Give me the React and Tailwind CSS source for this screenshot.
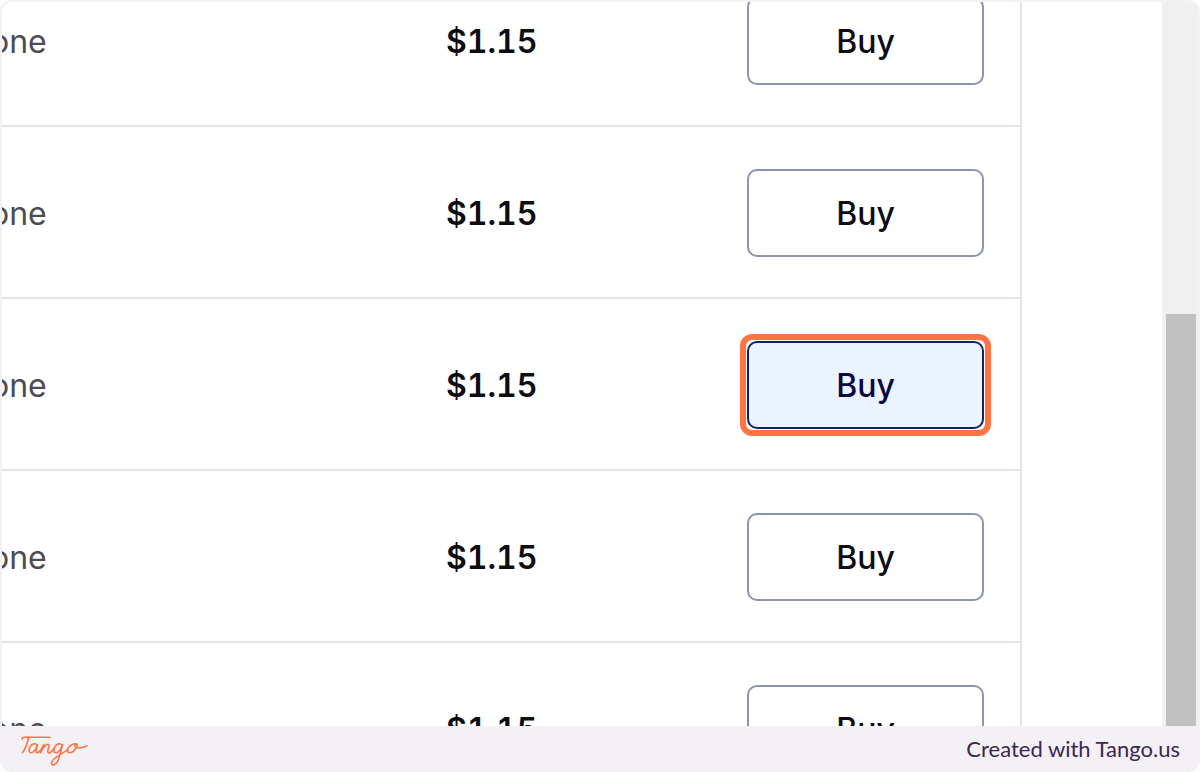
import React from 'react';

const rows = [
  { id: 1, type: 'one', price: '$1.15' },
  { id: 2, type: 'one', price: '$1.15' },
  { id: 3, type: 'one', price: '$1.15', active: true },
  { id: 4, type: 'one', price: '$1.15' },
  { id: 5, type: 'one', price: '$1.15' },
];

const BuyButton = ({ active }) => (
  <div className="relative">
    <button
      type="button"
      className={`block w-full h-22 pt-0.5 rounded-[10px] border-2 text-[32px] leading-10 font-medium ${
        active
          ? 'bg-[#eaf3ff] border-[#1c1c60] text-[#0b0840]'
          : 'bg-white border-[#8c94b0] text-[#0c0c12]'
      }`}
    >
      Buy
    </button>
    {/* Highlight frame */}
    {active && (
      <span className="absolute -inset-[7px] rounded-xl border-6 border-[#ff7442] pointer-events-none" />
    )}
  </div>
);

const TangoLogo = () => (
  <svg
    viewBox="0 0 70 36"
    className="w-[70px] h-9"
    fill="none"
    stroke="#ff7442"
    strokeWidth="1.6"
    strokeLinecap="round"
    strokeLinejoin="round"
    role="img"
    aria-label="Tango"
  >
    <path d="M2 8C2.200 6.800 3 6.300 4.500 6.300H30" />
    <path d="M8.500 6.500C7.500 12 5.500 17.500 2.500 21.700" />
    <path d="M17 14C15.500 12 12 12.500 10.300 15.500C8.500 18.800 8.800 21.800 11 21.800C13.500 21.800 16 18 17.500 13.500C16.500 17 15.300 20.500 16.500 21.500C18.500 22.500 21.500 18.500 23.800 13.500L20.500 21.800C22.500 17.500 26 13 28.300 13.200C30.800 13.600 26.500 20 28 21.500C29.500 22.500 32 20.500 34 17.500" />
    <path d="M42 14C40.500 12 37 12.500 35 15.500C33.300 18.800 33.500 21.800 35.800 21.800C38.500 21.800 41 18 42.500 13.500C41.300 18.500 40 25.500 37.800 30C35.800 34.500 31.500 35 31.500 31.800C31.500 27.500 41.500 24 47.500 18.500" />
    <path d="M56 12.800C52.500 12 48 16 47.500 19C47.200 22.300 50.800 22.600 53.800 19.800C57 16.800 58.500 12.800 56 12.800C53.800 13.300 54.500 16.600 58 17C61.500 17.300 64 15.600 67 15" />
  </svg>
);

const App = () => {
  return (
    <div className="h-screen bg-white font-['Inter',sans-serif]">
      <div className="h-full flex flex-col rounded-xl overflow-hidden bg-[#f3f1f6]">
        <main className="flex-1 min-h-0 flex mx-0.5 mt-0.5 rounded-t-[10px] overflow-hidden bg-white">
          <div className="flex-1 min-w-0 pr-35">
            <table className="w-full -mt-[47px] table-fixed border-separate border-spacing-0 border-r-2 border-[#e2e3ec]">
              <colgroup>
                <col />
                <col className="w-[301px]" />
                <col className="w-[273px]" />
              </colgroup>
              <tbody>
                {rows.map((row) => (
                  <tr key={row.id} className="h-43">
                    <td className="border-b-2 border-[#e2e3ec] px-0 pt-1 pb-0 text-[32px] leading-10 text-[#4c4c52]">
                      <span className="block -ml-3">{row.type}</span>
                    </td>
                    <td className="border-b-2 border-[#e2e3ec] px-0 pt-1 pb-0 text-[32px] leading-10 font-semibold tabular-nums text-[#0c0c12]">
                      {row.price}
                    </td>
                    <td className="border-b-2 border-[#e2e3ec] pt-0.5 pb-0 pl-0 pr-9">
                      <BuyButton active={row.active} />
                    </td>
                  </tr>
                ))}
              </tbody>
            </table>
          </div>
          {/* Scrollbar */}
          <div className="w-9 shrink-0 bg-[#f0f0f0] pl-1 pr-0.5 pt-[312px]">
            <div className="h-full bg-[#c1c1c1]" />
          </div>
        </main>

        <footer className="h-[46px] shrink-0 flex items-center justify-between px-5">
          <TangoLogo />
          <p className="font-['Lato',sans-serif] text-[22px] leading-7 text-[#3b2650]">Created with Tango.us</p>
        </footer>
      </div>
    </div>
  );
};

export default App;
